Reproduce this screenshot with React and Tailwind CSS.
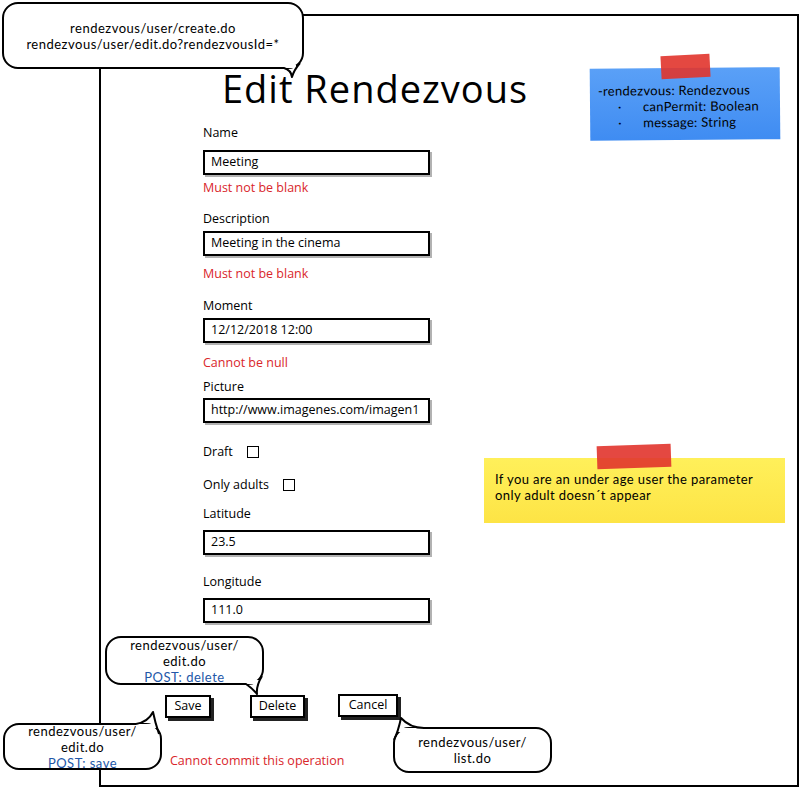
import React from 'react';

const font = { fontFamily: '"Open Sans", "Noto Sans", sans-serif' };
const noteFont = { fontFamily: 'Lato, "Noto Sans", sans-serif' };

const Field = ({ label, value, labelGap, inputGap }) => (
    <>
        <p className={`${labelGap} h-4 text-[12.5px] leading-4 text-black`}>{label}</p>
        <div className={`${inputGap} w-[227px] h-[25px] border-2 border-black bg-white shadow-[2px_2px_0_rgba(0,0,0,0.3)] flex items-center pl-[6px] text-[12.5px] text-black`}>
            {value}
        </div>
    </>
);

const Error = ({ text, gap }) => (
    <p className={`${gap} h-4 text-[12.5px] leading-4 text-[#d9262b]`}>{text}</p>
);

const Check = ({ label, gap, boxGap }) => (
    <div className={`${gap} h-4 flex items-center text-[12.5px] text-black`}>
        <span>{label}</span>
        <span className={`${boxGap} w-[12px] h-[12px] border-[1.5px] border-black`}></span>
    </div>
);

const Btn = ({ text, cls }) => (
    <div className={`${cls} h-[23px] border-2 border-black bg-white shadow-[3px_3px_0_#222] flex items-center justify-center text-[12.5px] text-black`}>
        {text}
    </div>
);

const Bubble = ({ cls, children }) => (
    <div className={`absolute ${cls} border-2 border-black rounded-[16px] bg-white flex flex-col items-center justify-center text-[13px] leading-[16px] tracking-[0.5px] text-black text-center`} style={noteFont}>
        {children}
    </div>
);

export default function App() {
    return (
        <div className="relative w-[800px] h-[789px] bg-white overflow-hidden" style={font}>

            {/* main frame */}
            <div className="ml-[99px] mt-[14px] w-[700px] h-[773px] border-2 border-black flex flex-col">
                <h1 className="mt-[50px] ml-[121px] h-[44px] text-[38px] leading-[44px] tracking-[1px] text-black">Edit Rendezvous</h1>

                <div className="pl-[102px] flex flex-col">
                    <Field label="Name" value="Meeting" labelGap="mt-[15px]" inputGap="mt-[9px]" />
                    <Error text="Must not be blank" gap="mt-[5px]" />
                    <Field label="Description" value="Meeting in the cinema" labelGap="mt-[15px]" inputGap="mt-[4px]" />
                    <Error text="Must not be blank" gap="mt-[10px]" />
                    <Field label="Moment" value="12/12/2018 12:00" labelGap="mt-[16px]" inputGap="mt-[4px]" />
                    <Error text="Cannot be null" gap="mt-[12px]" />
                    <Field label="Picture" value="http://www.imagenes.com/imagen1" labelGap="mt-[8px]" inputGap="mt-[3px]" />
                    <Check label="Draft" gap="mt-[21px]" boxGap="ml-[14px]" />
                    <Check label="Only adults" gap="mt-[17px]" boxGap="ml-[14px]" />
                    <Field label="Latitude" value="23.5" labelGap="mt-[13px]" inputGap="mt-[8px]" />
                    <Field label="Longitude" value="111.0" labelGap="mt-[19px]" inputGap="mt-[8px]" />
                </div>

                <div className="mt-[71px] pl-[64px] flex items-start">
                    <Btn text="Save" cls="w-[46px] mt-px" />
                    <Btn text="Delete" cls="w-[55px] ml-[39px] mt-px" />
                    <Btn text="Cancel" cls="w-[60px] ml-[33px]" />
                </div>

                <p className="mt-[35px] ml-[69px] text-[12.5px] leading-4 text-[#d9262b]">Cannot commit this operation</p>
            </div>

            {/* blue sticky */}
            <div className="absolute left-[590px] top-[68px] w-[190px] h-[72px] bg-gradient-to-b from-[#5aa0f7] to-[#3f8cf2] text-[13px] leading-4 tracking-[0.3px] text-black pl-[8px] pt-[14px] -rotate-[0.5deg]" style={noteFont}>
                <p>-rendezvous: Rendezvous</p>
                <p className="flex"><span className="ml-[20px] w-[25px]">·</span><span>canPermit: Boolean</span></p>
                <p className="flex"><span className="ml-[20px] w-[25px]">·</span><span>message: String</span></p>
            </div>
            <div className="absolute left-[661px] top-[55px] w-[49px] h-[23px] bg-[#e1342c] opacity-90 -rotate-[3deg]"></div>

            {/* yellow sticky */}
            <div className="absolute left-[484px] top-[458px] w-[301px] h-[65px] bg-gradient-to-b from-[#fff05a] to-[#fde445] text-[13px] leading-4 tracking-[0.4px] text-black pl-[11px] pt-[13px]" style={noteFont}>
                <p>If you are an under age user the parameter</p>
                <p>only adult doesn´t appear</p>
            </div>
            <div className="absolute left-[597px] top-[445px] w-[74px] h-[23px] bg-[#e1342c] opacity-90 -rotate-[2deg]"></div>

            {/* callouts */}
            <Bubble cls="left-[2px] top-[2px] w-[302px] h-[67px]">
                <p>rendezvous/user/create.do</p>
                <p>rendezvous/user/edit.do?rendezvousId=*</p>
            </Bubble>
            <svg className="absolute left-0 top-0" width="800" height="789">
                <rect x="276" y="65" width="20" height="3" fill="white" />
                <path d="M276 68 L284 68 Q291 70 292 77 Q294 70 300 63" fill="none" stroke="black" strokeWidth="2" strokeLinejoin="round" />
            </svg>

            <Bubble cls="left-[105px] top-[636px] w-[159px] h-[49px]">
                <p>rendezvous/user/</p>
                <p>edit.do</p>
                <p className="text-[#2257a8]">POST: delete</p>
            </Bubble>
            <svg className="absolute left-0 top-0" width="800" height="789">
                <rect x="238" y="680" width="22" height="4" fill="white" />
                <path d="M238 684 L246 684 Q252 688 257 694 Q256 686 262 676" fill="none" stroke="black" strokeWidth="2" strokeLinejoin="round" />
            </svg>

            <Bubble cls="left-[3px] top-[723px] w-[159px] h-[47px]">
                <p>rendezvous/user/</p>
                <p>edit.do</p>
                <p className="text-[#2257a8]">POST: save</p>
            </Bubble>
            <svg className="absolute left-0 top-0" width="800" height="789">
                <rect x="136" y="724" width="22" height="4" fill="white" />
                <path d="M136 724 Q148 722 153 712 Q155 722 159 734" fill="none" stroke="black" strokeWidth="2" strokeLinejoin="round" />
            </svg>

            <Bubble cls="left-[393px] top-[727px] w-[159px] h-[46px]">
                <p>rendezvous/user/</p>
                <p>list.do</p>
            </Bubble>
            <svg className="absolute left-0 top-0" width="800" height="789">
                <rect x="395" y="728" width="28" height="4" fill="white" />
                <path d="M394 740 Q398 732 401 718 Q410 728 424 728" fill="none" stroke="black" strokeWidth="2" strokeLinejoin="round" />
            </svg>
        </div>
    );
}
